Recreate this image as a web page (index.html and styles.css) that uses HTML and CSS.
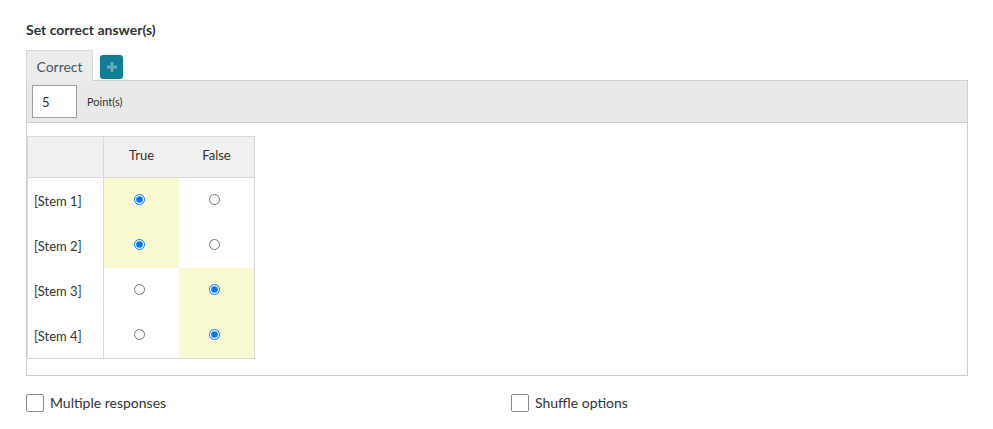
FILE: index.html
```html
<!DOCTYPE html>
<html>
<head>
<meta charset="utf-8">
<link rel="stylesheet" href="styles.css">
</head>
<body>
<div class="page">
  <h3 class="title">Set correct answer(s)</h3>
  <div class="tabs">
    <div class="tab">Correct</div>
    <button class="add" type="button" aria-label="Add">
      <svg width="10" height="10" viewBox="0 0 10 10"><path d="M3.6 0h2.8v3.6H10v2.8H6.4V10H3.6V6.4H0V3.6h3.6z" fill="#62abbd"/></svg>
    </button>
  </div>
  <div class="panel">
    <div class="panel-head">
      <input class="points" type="text" value="5">
      <span class="points-label">Point(s)</span>
    </div>
    <div class="panel-body">
      <table class="grid">
        <thead>
          <tr><th class="stem-col"></th><th>True</th><th>False</th></tr>
        </thead>
        <tbody>
          <tr><td class="stem-col">[Stem 1]</td><td class="hl"><input type="radio" name="s1" checked></td><td><input type="radio" name="s1"></td></tr>
          <tr><td class="stem-col">[Stem 2]</td><td class="hl"><input type="radio" name="s2" checked></td><td><input type="radio" name="s2"></td></tr>
          <tr><td class="stem-col">[Stem 3]</td><td><input type="radio" name="s3"></td><td class="hl"><input type="radio" name="s3" checked></td></tr>
          <tr><td class="stem-col">[Stem 4]</td><td><input type="radio" name="s4"></td><td class="hl"><input type="radio" name="s4" checked></td></tr>
        </tbody>
      </table>
    </div>
  </div>
  <div class="options">
    <label class="opt"><span class="box"></span>Multiple responses</label>
    <label class="opt"><span class="box"></span>Shuffle options</label>
  </div>
</div>
</body>
</html>
```

FILE: styles.css
```css
html, body {
  margin: 0;
  padding: 0;
  background: #fff;
}
body {
  font-family: Lato, "Open Sans", "Liberation Sans", sans-serif;
  color: #333;
}
.page {
  padding: 21px 26px 0 26px;
  width: 942px;
}
.title {
  margin: 0;
  font-size: 14px;
  line-height: 18px;
  font-weight: bold;
  color: #333;
}
.tabs {
  display: flex;
  align-items: flex-start;
  margin-top: 11px;
  position: relative;
  z-index: 1;
}
.tab {
  box-sizing: border-box;
  width: 67px;
  height: 31px;
  border: 1px solid #d9d9d9;
  border-bottom: none;
  background: #ececec;
  font-size: 14px;
  line-height: 32px;
  text-align: center;
  color: #4a5560;
}
.add {
  margin: 5px 0 0 7px;
  width: 23px;
  height: 24px;
  padding: 0;
  border: none;
  border-radius: 3px;
  background: #137d95;
  display: flex;
  align-items: center;
  justify-content: center;
}
.panel {
  border: 1px solid #cfcfcf;
  margin-top: -1px;
}
.panel-head {
  background: #e9e9e9;
  border-bottom: 1px solid #cfcfcf;
  padding: 4px 5px 4px 5px;
  display: flex;
  align-items: center;
  height: 33px;
}
.points {
  box-sizing: border-box;
  width: 45px;
  height: 33px;
  border: 1px solid #a0a0a0;
  background: #fff;
  padding: 0 0 0 9px;
  font-family: inherit;
  font-size: 13px;
  color: #333;
  margin: 0;
}
.points-label {
  font-size: 11px;
  margin-left: 10px;
  color: #333;
}
.panel-body {
  padding: 13px 0 16px 0;
}
.grid {
  border-collapse: collapse;
  border: 1px solid #d9d9d9;
  font-size: 13px;
  color: #333;
}
.grid th {
  box-sizing: border-box;
  background: #f0f0f0;
  height: 41px;
  font-weight: normal;
  border-bottom: 1px solid #d9d9d9;
  padding: 0 0 4px 0;
  width: 75px;
}
.grid td {
  height: 45px;
  padding: 0;
  text-align: center;
  vertical-align: middle;
  width: 75px;
}
.grid .stem-col {
  border-right: 1px solid #d9d9d9;
  text-align: left;
  padding-left: 6px;
  width: 69px;
}
.grid td.hl {
  background: #fafad2;
}
.grid input[type="radio"] {
  display: block;
  margin: -3px auto 0 30px;
  width: 11px;
  height: 11px;
}
.options {
  display: grid;
  grid-template-columns: 485px 1fr;
  margin-top: 18px;
}
.opt {
  display: flex;
  align-items: center;
  font-size: 14px;
  line-height: 18px;
  color: #333;
}
.box {
  box-sizing: border-box;
  width: 18px;
  height: 18px;
  border: 1px solid #8a8a8a;
  border-radius: 2px;
  margin-right: 6px;
  background: #fff;
}
```
